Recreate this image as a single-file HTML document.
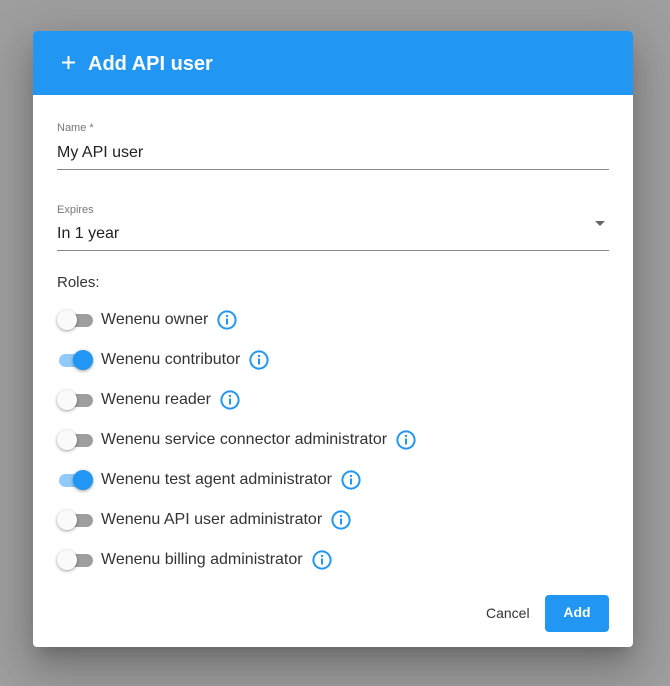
<!DOCTYPE html>
<html><head><style>
body{margin:0;width:670px;height:686px;background:#9e9e9e;font-family:"Liberation Sans",sans-serif;position:relative;overflow:hidden}
.dlg{position:absolute;left:33px;top:31px;width:600px;height:616px;background:#fff;border-radius:4px;box-shadow:0 11px 15px -7px rgba(0,0,0,.2),0 24px 38px 3px rgba(0,0,0,.14),0 9px 46px 8px rgba(0,0,0,.12);overflow:hidden}
.hd{height:64px;background:#2196f3;color:#fff;font-weight:bold;font-size:20px;position:relative}
.hd span{position:absolute;left:55px;top:22px}
.hd svg{position:absolute;left:29px;top:25px}
.lbl{position:absolute;left:24px;font-size:11px;color:#777}
.val{position:absolute;left:24px;font-size:16px;color:#222}
.line{position:absolute;left:24px;width:552px;height:1px;background:#888}
.row{position:absolute;left:24px;height:20px;font-size:16px;color:#333}
.tr{position:absolute;left:2px;top:4px;width:34px;height:13px;border-radius:7px;background:#9e9e9e}
.th{position:absolute;left:0;top:0;width:20px;height:20px;border-radius:50%;background:#fafafa;box-shadow:0 1px 3px rgba(0,0,0,.4)}
.on .tr{background:#90caf9}.on .th{left:16px;background:#2196f3}
.row .t{position:absolute;left:44px;top:0;white-space:nowrap;display:flex;align-items:center;line-height:20px}
.row svg{margin-left:9px;margin-top:-1px}
</style></head><body>
<div class="dlg">
<div class="hd"><svg width="13" height="13" viewBox="0 0 13 13"><path d="M6.5 0v13M0 6.5h13" stroke="#fff" stroke-width="2"/></svg><span>Add API user</span></div>
<div class="lbl" style="top:91px">Name *</div>
<div class="val" style="top:113px">My API user</div>
<div class="line" style="top:138px"></div>
<div class="lbl" style="top:173px">Expires</div>
<div class="val" style="top:194px">In 1 year</div>
<svg style="position:absolute;left:562px;top:190px" width="10" height="6"><path d="M0 0h10L5 5z" fill="#666"/></svg>
<div class="line" style="top:219px"></div>
<div class="val" style="top:243px;font-size:15px;color:#333">Roles:</div>

<div class="row" style="top:279px"><div class="tr"></div><div class="th"></div><span class="t">Wenenu owner<svg width="20" height="20" viewBox="0 0 20 20"><circle cx="10" cy="10" r="8.6" fill="none" stroke="#2196f3" stroke-width="2"/><rect x="9" y="8.5" width="2" height="6" fill="#2196f3"/><circle cx="10" cy="6" r="1.2" fill="#2196f3"/></svg></span></div>
<div class="row on" style="top:319px"><div class="tr"></div><div class="th"></div><span class="t">Wenenu contributor<svg width="20" height="20" viewBox="0 0 20 20"><circle cx="10" cy="10" r="8.6" fill="none" stroke="#2196f3" stroke-width="2"/><rect x="9" y="8.5" width="2" height="6" fill="#2196f3"/><circle cx="10" cy="6" r="1.2" fill="#2196f3"/></svg></span></div>
<div class="row" style="top:359px"><div class="tr"></div><div class="th"></div><span class="t">Wenenu reader<svg width="20" height="20" viewBox="0 0 20 20"><circle cx="10" cy="10" r="8.6" fill="none" stroke="#2196f3" stroke-width="2"/><rect x="9" y="8.5" width="2" height="6" fill="#2196f3"/><circle cx="10" cy="6" r="1.2" fill="#2196f3"/></svg></span></div>
<div class="row" style="top:399px"><div class="tr"></div><div class="th"></div><span class="t">Wenenu service connector administrator<svg width="20" height="20" viewBox="0 0 20 20"><circle cx="10" cy="10" r="8.6" fill="none" stroke="#2196f3" stroke-width="2"/><rect x="9" y="8.5" width="2" height="6" fill="#2196f3"/><circle cx="10" cy="6" r="1.2" fill="#2196f3"/></svg></span></div>
<div class="row on" style="top:439px"><div class="tr"></div><div class="th"></div><span class="t">Wenenu test agent administrator<svg width="20" height="20" viewBox="0 0 20 20"><circle cx="10" cy="10" r="8.6" fill="none" stroke="#2196f3" stroke-width="2"/><rect x="9" y="8.5" width="2" height="6" fill="#2196f3"/><circle cx="10" cy="6" r="1.2" fill="#2196f3"/></svg></span></div>
<div class="row" style="top:479px"><div class="tr"></div><div class="th"></div><span class="t">Wenenu API user administrator<svg width="20" height="20" viewBox="0 0 20 20"><circle cx="10" cy="10" r="8.6" fill="none" stroke="#2196f3" stroke-width="2"/><rect x="9" y="8.5" width="2" height="6" fill="#2196f3"/><circle cx="10" cy="6" r="1.2" fill="#2196f3"/></svg></span></div>
<div class="row" style="top:519px"><div class="tr"></div><div class="th"></div><span class="t">Wenenu billing administrator<svg width="20" height="20" viewBox="0 0 20 20"><circle cx="10" cy="10" r="8.6" fill="none" stroke="#2196f3" stroke-width="2"/><rect x="9" y="8.5" width="2" height="6" fill="#2196f3"/><circle cx="10" cy="6" r="1.2" fill="#2196f3"/></svg></span></div>

<div style="position:absolute;left:453px;top:574px;font-size:14px;color:#333">Cancel</div>
<div style="position:absolute;left:512px;top:564px;width:64px;height:37px;background:#2196f3;border-radius:4px;color:#fff;font-weight:bold;font-size:14px;text-align:center;line-height:34px">Add</div>
</div>
</body></html>
